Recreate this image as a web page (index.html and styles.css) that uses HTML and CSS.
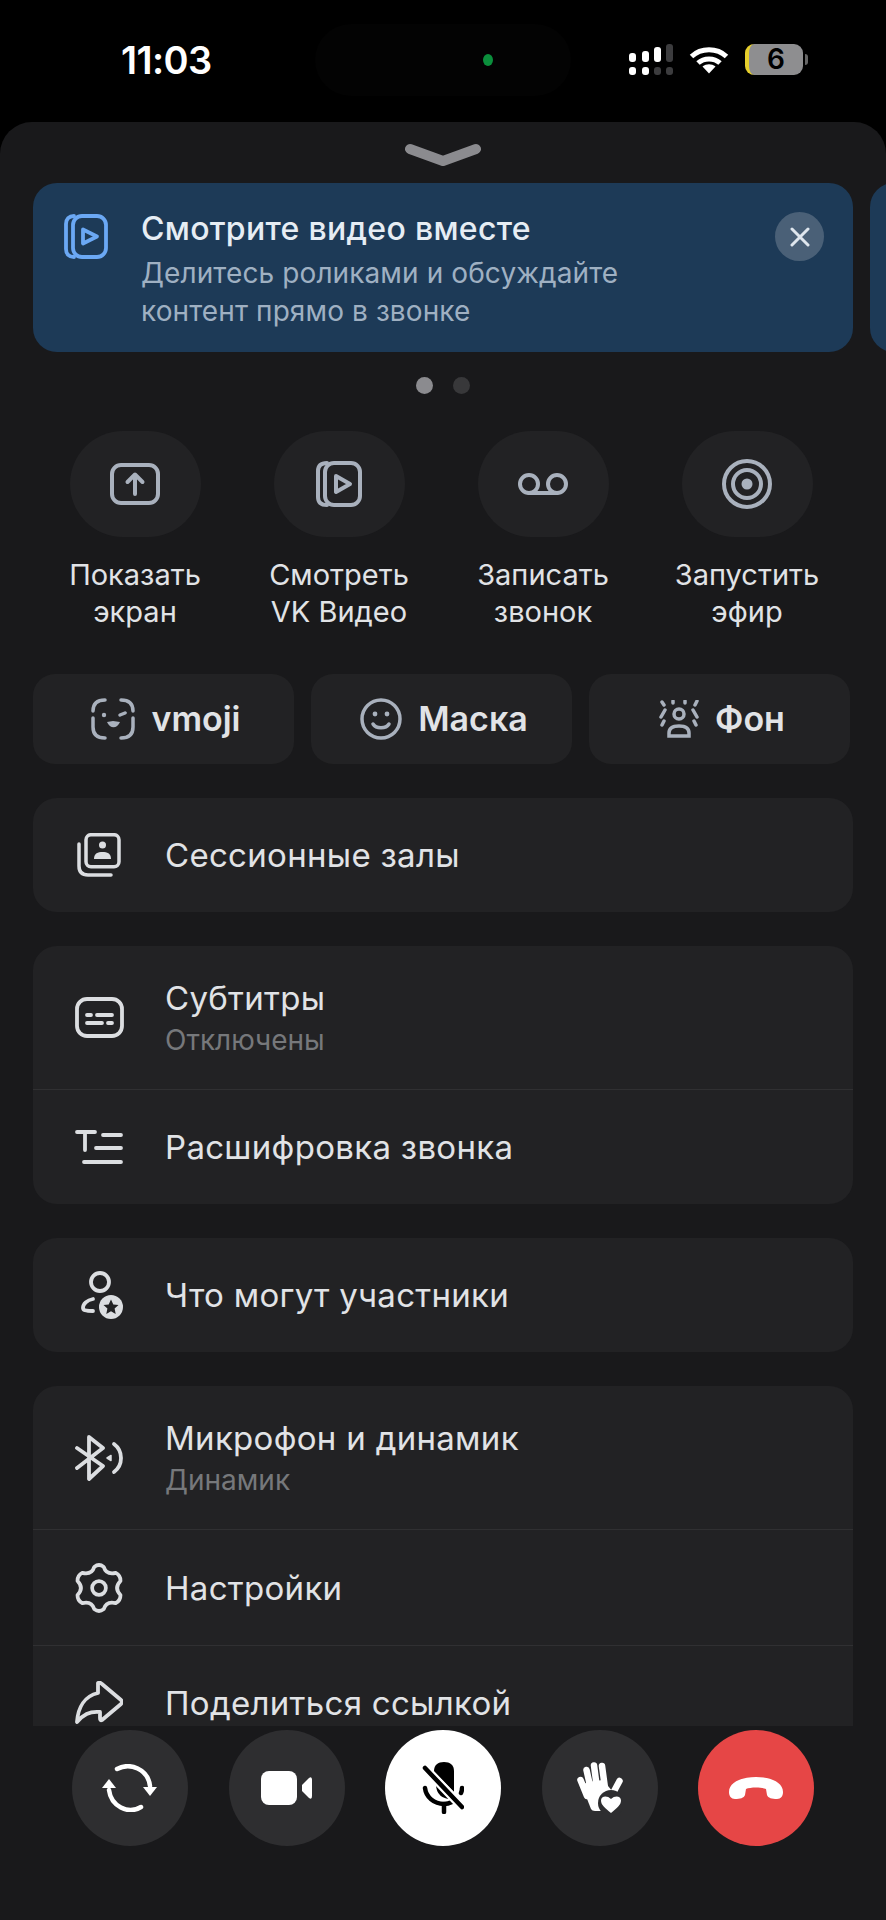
FILE: index.html
```html
<!DOCTYPE html>
<html lang="ru">
<head>
<meta charset="utf-8">
<title>Звонок</title>
<link rel="stylesheet" href="styles.css">
</head>
<body>
<div class="phone">
  <header class="status">
    <span class="time">11:03</span>
    <div class="island"><span class="cam-dot"></span></div>
    <div class="status-icons">
      <svg class="sig" viewBox="0 0 44 31" fill="#fff"><rect x="0" y="9" width="7" height="9" rx="3"/><rect x="13" y="7" width="7" height="11" rx="3"/><rect x="25" y="3" width="7" height="15" rx="3"/><rect x="37" y="0" width="7" height="18" rx="3" fill="#3c3c3e"/><rect x="0" y="23" width="7" height="8" rx="3"/><rect x="13" y="23" width="7" height="8" rx="3"/><rect x="25" y="23" width="7" height="8" rx="3" fill="#3c3c3e"/><rect x="37" y="23" width="7" height="8" rx="3" fill="#3c3c3e"/></svg>
      <svg class="wifi" viewBox="0 0 40 28" fill="none" stroke="#fff" stroke-width="5"><path d="M2.5 10.5C12 1.500 28 1.500 37.500 10.500"/><path d="M9 17C15 11.500 25 11.500 31 17"/><path fill="#fff" stroke="none" d="M13.500 20.500C17.500 17.500 22.500 17.500 26.500 20.500L20 27.500Z"/></svg>
      <div class="battery"><span class="bat-body"><span class="bat-num">6</span></span><span class="bat-cap"></span></div>
    </div>
  </header>

  <main class="sheet">
    <div class="handle">
      <svg class="chevron" viewBox="0 0 76 23" fill="none" stroke="#8b8b8f" stroke-width="10" stroke-linecap="round" stroke-linejoin="round"><path d="M5 6L38 18L71 6"/></svg>
    </div>

    <div class="carousel">
      <section class="banner">
        <svg class="banner-icon" viewBox="0 0 44 45" fill="none" stroke="#6ba8f4" stroke-width="3.800" stroke-linejoin="round" stroke-linecap="round"><path d="M10 2C5 2 2 5 2 10V35C2 40 5 43 10 43"/><rect x="9" y="2" width="33" height="41" rx="9"/><path d="M19 15.500L33 22.500L19 29.500Z"/></svg>
        <div class="banner-text">
          <h2 class="banner-title">Смотрите видео вместе</h2>
          <p class="banner-sub">Делитесь роликами и обсуждайте<br>контент прямо в звонке</p>
        </div>
        <div class="banner-close"><svg viewBox="0 0 20 20" fill="none" stroke="#dfe6ee" stroke-width="3" stroke-linecap="round"><path d="M2 2L18 18M18 2L2 18"/></svg></div>
      </section>
      <section class="banner banner-next"></section>
    </div>

    <div class="dots"><span class="dot dot-on"></span><span class="dot"></span></div>

    <div class="actions">
      <div class="action">
        <div class="action-btn"><svg class="i-share" viewBox="0 0 50 42" fill="none" stroke="#a9b1bd" stroke-width="4" stroke-linecap="round" stroke-linejoin="round"><rect x="2" y="2" width="46" height="38" rx="9"/><path d="M25 31V12M17.500 19L25 11.500L32.500 19"/></svg></div>
        <span class="action-label">Показать<br>экран</span>
      </div>
      <div class="action">
        <div class="action-btn"><svg class="i-play" viewBox="0 0 46 46" fill="none" stroke="#a9b1bd" stroke-width="4" stroke-linecap="round" stroke-linejoin="round"><path d="M11 2C5 2 2 5 2 10V36C2 41 5 44 11 44"/><rect x="9" y="2" width="35" height="42" rx="9"/><path d="M20 15L34 23L20 31Z"/></svg></div>
        <span class="action-label">Смотреть<br>VK Видео</span>
      </div>
      <div class="action">
        <div class="action-btn"><svg class="i-rec" viewBox="0 0 50 22" fill="none" stroke="#a9b1bd" stroke-width="4" stroke-linecap="round"><circle cx="11" cy="11" r="9"/><circle cx="39" cy="11" r="9"/><path d="M11 20H39"/></svg></div>
        <span class="action-label">Записать<br>звонок</span>
      </div>
      <div class="action">
        <div class="action-btn"><svg class="i-live" viewBox="0 0 50 50" fill="none" stroke="#a9b1bd" stroke-width="4"><circle cx="25" cy="25" r="23"/><circle cx="25" cy="25" r="14"/><circle cx="25" cy="25" r="5.500" fill="#a9b1bd" stroke="none"/></svg></div>
        <span class="action-label">Запустить<br>эфир</span>
      </div>
    </div>

    <div class="pills">
      <div class="pill">
        <svg class="i-pill" viewBox="0 0 44 42" fill="none" stroke="#a9b1bd" stroke-width="3.500" stroke-linecap="round"><path d="M14 2C6 2 2 6 2 13"/><path d="M30 2C38 2 42 6 42 13"/><path d="M2 20V29C2 36 6 40 14 40"/><path d="M42 20V29C42 36 38 40 30 40"/><circle cx="13" cy="17" r="2.200" fill="#a9b1bd" stroke="none"/><path d="M29 17L34 15"/><path d="M16 24C19 31 26 31 29 24L22 23Z" fill="#a9b1bd" stroke="none"/></svg>
        <span class="pill-text">vmoji</span>
      </div>
      <div class="pill">
        <svg class="i-pill" viewBox="0 0 42 42" fill="none" stroke="#a9b1bd" stroke-width="3.500" stroke-linecap="round"><circle cx="21" cy="21" r="19"/><circle cx="15" cy="16" r="2.400" fill="#a9b1bd" stroke="none"/><circle cx="27" cy="16" r="2.400" fill="#a9b1bd" stroke="none"/><path d="M13 26C16 31 26 31 29 26"/></svg>
        <span class="pill-text">Маска</span>
      </div>
      <div class="pill">
        <svg class="i-fon" viewBox="0 0 40 38" fill="none" stroke="#a9b1bd" stroke-width="3.500" stroke-linecap="round"><path d="M3 2L5 5M14 1V3M26 1V3M38 1L36 5M6 10L2 17M34 10L38 17M5 21L3 25M35 21L37 25"/><circle cx="20" cy="14" r="5"/><path d="M10 36V33C10 28 14 26 20 26C26 26 30 28 30 33V36Z"/></svg>
        <span class="pill-text">Фон</span>
      </div>
    </div>

    <div class="scroll">
      <div class="group">
        <div class="row">
          <span class="row-ic"><svg class="ic-session" viewBox="0 0 44 44" fill="none" stroke="#dcdee1" stroke-width="3.500" stroke-linecap="round" stroke-linejoin="round"><rect x="9" y="1.700" width="33" height="32" rx="5"/><path d="M2 11V33C2 39 5 42 11 42H34"/><circle cx="25.500" cy="12" r="3.500" fill="#dcdee1" stroke="none"/><path d="M17 26C17 20 21 19 25.500 19C30 19 34 20 34 26Z" fill="#dcdee1" stroke="none"/></svg></span>
          <span class="row-title">Сессионные залы</span>
        </div>
      </div>

      <div class="group">
        <div class="row row-two">
          <span class="row-ic"><svg class="ic-sub" viewBox="0 0 49 41" fill="none" stroke="#dcdee1" stroke-width="3.800" stroke-linecap="round"><rect x="2" y="2" width="45" height="37" rx="10"/><path d="M12 18H16M22 18H37M12 26H27M33 26H37"/></svg></span>
          <span class="row-text"><span class="row-title">Субтитры</span><span class="row-sub">Отключены</span></span>
        </div>
        <div class="row row-line">
          <span class="row-ic"><svg class="ic-trans" viewBox="0 0 48 34" fill="none" stroke="#dcdee1" stroke-width="3.800" stroke-linecap="round"><path d="M2 2H20M10 2V20M28 5H46M21 18H46M9 32H46"/></svg></span>
          <span class="row-title">Расшифровка звонка</span>
        </div>
      </div>

      <div class="group">
        <div class="row">
          <span class="row-ic"><svg class="ic-part" viewBox="0 0 42 48" fill="none" stroke="#dcdee1" stroke-width="3.800" stroke-linecap="round"><circle cx="19" cy="11" r="9"/><path d="M12 28C6 29 2 33 2 37C2 39 4 40 12 40"/><circle cx="30" cy="36" r="12" fill="#dcdee1" stroke="none"/><path d="M30 28.500L32.300 33.500L37.500 34L33.600 37.500L34.700 43L30 40.200L25.300 43L26.400 37.500L22.500 34L27.700 33.500Z" fill="#222224" stroke="none"/></svg></span>
          <span class="row-title">Что могут участники</span>
        </div>
      </div>

      <div class="group">
        <div class="row row-two">
          <span class="row-ic"><svg class="ic-bt" viewBox="0 0 48 46" fill="none" stroke="#dcdee1" stroke-width="3.800" stroke-linecap="round" stroke-linejoin="round"><path d="M2 13L28 31L14 44V2L28 13L2 33"/><path d="M39 9C43 12 46 17 46 23C46 29 43 34 39 37"/><path d="M32 23L36 20.500V25.500Z" fill="#dcdee1" stroke-width="1.500"/></svg></span>
          <span class="row-text"><span class="row-title">Микрофон и динамик</span><span class="row-sub">Динамик</span></span>
        </div>
        <div class="row row-line row-tall">
          <span class="row-ic"><svg class="ic-gear" viewBox="-1 -1 51 51" fill="none" stroke="#dcdee1" stroke-width="3.800" stroke-linejoin="round"><path d="M19.700 3Q24.500 -1 29.300 3Q32 11.500 41.600 9.100Q46.600 11.750 46.400 17.400Q39.500 24.500 46.400 31.600Q46.600 37.250 41.600 39.900Q32 37.500 29.300 46Q24.500 50 19.700 46Q17 37.500 7.400 39.900Q2.400 37.250 2.600 31.600Q9.500 24.500 2.600 17.400Q2.400 11.750 7.400 9.100Q17 11.500 19.700 3Z"/><circle cx="24.500" cy="24.500" r="7"/></svg></span>
          <span class="row-title">Настройки</span>
        </div>
        <div class="row row-line">
          <span class="row-ic"><svg class="ic-arrow" viewBox="0 0 48 44" fill="none" stroke="#dcdee1" stroke-width="3.800" stroke-linecap="round" stroke-linejoin="round"><path d="M23 2Q25 1 27 3L46 19Q48 21 46 23L27 39Q25 40 25 37V31C14 30 8 34 2 41C3 26 10 15 23 12Z"/></svg></span>
          <span class="row-title">Поделиться ссылкой</span>
        </div>
      </div>
    </div>

    <nav class="callbar">
      <button class="cbtn"><svg class="c-rot" viewBox="0 0 56 48" fill="none" stroke="#fff" stroke-width="4.500" stroke-linecap="round"><path d="M15 5C28 -2 46 5 48 22"/><path d="M7 26C9 42 26 51 39 43"/><path d="M41 23H55L48 32Z" fill="#fff" stroke="none"/><path d="M0 24H14L7 15Z" fill="#fff" stroke="none"/></svg></button>
      <button class="cbtn"><svg class="c-cam" viewBox="0 0 51 34" fill="#fff"><rect width="36" height="34" rx="8"/><path d="M41 14L48 7Q51 5 51 9V25Q51 29 48 27L41 20Z"/></svg></button>
      <button class="cbtn cbtn-white"><svg class="c-mic" viewBox="0 0 42 52" fill="none" stroke="#000" stroke-linecap="round"><path d="M12 9C12 3 16 0 22 0C28 0 32 3 32 9V30L12 10Z" fill="#000" stroke="none"/><path d="M14 22L32 37C26 38 14 36 14 22Z" fill="#000" stroke="none"/><path d="M3 26C4 35 12 42 22 42C25 42 28 41 30 40M40 26C40 28 39.500 30 39 31" stroke-width="4.500"/><path d="M22 42V50" stroke-width="4.500"/><path d="M3 6L40 45" stroke="#fff" stroke-width="9"/><path d="M3 6L40 45" stroke-width="4.500"/></svg></button>
      <button class="cbtn"><svg class="c-hand" viewBox="0 0 46 52" fill="#fff" stroke="none"><g stroke="#fff" stroke-width="6.500" stroke-linecap="round"><path d="M3.500 18L10 34M9.500 8L14 28M17 3.500L20 26M25 4L28 26M42.500 19L35 33"/></g><path d="M5 24L14 47Q15 49 18 49H28L36 30L26 18L10 20Z"/><circle cx="34" cy="41" r="13" fill="#2e2e30"/><path d="M34 51C28 46 24 43 24 38.500C24 34 30 33 34 37C38 33 44 34 44 38.500C44 43 40 46 34 51Z"/></svg></button>
      <button class="cbtn cbtn-red"><svg class="c-end" viewBox="0 0 54 22" fill="#fff"><path d="M0 15C0 5 13 0 27 0C41 0 54 5 54 15C54 19 52 22 48 22C43 22 39 21 38 18L37 12C33 10 21 10 17 12L16 18C15 21 11 22 6 22C2 22 0 19 0 15Z"/></svg></button>
    </nav>
  </main>
</div>
</body>
</html>
```

FILE: styles.css
```css
* { box-sizing: border-box; }
html, body { margin: 0; padding: 0; background: #000; }
body { font-family: Inter, "Liberation Sans", sans-serif; color: #e1e3e6; }
.phone { width: 886px; height: 1920px; display: flex; flex-direction: column; overflow: hidden; background: #000; }

.status { height: 122px; flex: none; display: flex; align-items: flex-start; padding-top: 39px; }
.time { margin-left: 121px; width: 194px; font-size: 38px; line-height: 42px; font-weight: 600; color: #fff; letter-spacing: -.6px; }
.island { width: 256px; height: 72px; margin-top: -15px; border-radius: 36px; background: #030303; display: flex; justify-content: flex-end; align-items: center; padding-right: 78px; }
.cam-dot { width: 10px; height: 12px; border-radius: 50%; background: #0b8f3c; }
.status-icons { margin-left: 58px; margin-top: 5px; display: flex; align-items: flex-start; }
.sig { width: 44px; height: 31px; margin-right: 16px; }
.wifi { width: 40px; height: 28px; margin-top: 2px; margin-right: 16px; }
.battery { display: flex; align-items: center; }
.bat-body { width: 58px; height: 31px; border-radius: 9px; background: #8e8e90; border-left: 4px solid #e6cf2c; display: flex; align-items: center; justify-content: center; }
.bat-num { font-size: 28px; font-weight: 600; color: #000; line-height: 31px; }
.bat-cap { width: 3px; height: 11px; margin-left: 2px; border-radius: 0 3px 3px 0; background: #666; }

.sheet { flex: 1; min-height: 0; display: flex; flex-direction: column; background: #19191b; border-radius: 32px 32px 0 0; }
.handle { height: 61px; flex: none; display: flex; justify-content: center; padding-top: 21px; }
.chevron { width: 76px; height: 23px; }

.carousel { flex: none; display: flex; gap: 17px; padding-left: 33px; overflow: hidden; }
.banner { flex: none; width: 820px; height: 169px; border-radius: 24px; background: #1d3a57; display: flex; align-items: flex-start; padding: 26px 29px 0 31px; }
.banner-next { width: 60px; }
.banner-icon { flex: none; width: 44px; height: 45px; margin-top: 5px; }
.banner-text { flex: 1; margin-left: 33px; }
.banner-title { margin: 0; font-size: 32px; line-height: 39px; font-weight: 500; color: #e6edf4; letter-spacing: .3px; }
.banner-sub { margin: 6px 0 0; font-size: 28px; line-height: 38px; font-weight: 400; color: #9fb0c2; letter-spacing: .1px; }
.banner-close { flex: none; width: 49px; height: 49px; margin-top: 3px; border-radius: 50%; background: #4a6077; display: flex; align-items: center; justify-content: center; }
.banner-close svg { width: 20px; height: 20px; }

.dots { flex: none; height: 16px; margin-top: 25px; display: flex; justify-content: center; gap: 20px; }
.dot { width: 17px; height: 17px; border-radius: 50%; background: #38383a; }
.dot-on { background: #8b8b8f; }

.actions { flex: none; margin-top: 38px; padding-left: 33px; display: grid; grid-template-columns: repeat(4, 204px); }
.action { display: flex; flex-direction: column; align-items: center; }
.action-btn { width: 131px; height: 106px; border-radius: 53px; background: #222224; display: flex; align-items: center; justify-content: center; }
.action-label { margin-top: 19px; font-size: 29px; line-height: 37px; text-align: center; color: #e1e3e6; white-space: nowrap; }
.i-share { width: 50px; height: 42px; }
.i-play { width: 46px; height: 46px; }
.i-rec { width: 50px; height: 22px; }
.i-live { width: 50px; height: 50px; }

.pills { flex: none; margin-top: 44px; padding-left: 33px; display: grid; grid-template-columns: repeat(3, 261px); gap: 17px; }
.pill { height: 90px; padding-left: 5px; border-radius: 22px; background: #222224; display: flex; align-items: center; justify-content: center; gap: 16px; }
.pill-text { font-size: 34px; font-weight: 600; color: #e1e3e6; line-height: 40px; }
.i-pill { height: 42px; width: auto; flex: none; }
.i-fon { height: 38px; width: 40px; flex: none; }

.scroll { flex: 1; min-height: 0; overflow: hidden; margin-top: 34px; padding: 0 33px; display: flex; flex-direction: column; gap: 34px; }
.group { flex: none; border-radius: 24px; background: #222224; }
.row { height: 114px; display: flex; align-items: center; padding-left: 41px; }
.row-two { height: 143px; }
.row-line { height: 115px; border-top: 1px solid #303032; }
.row-tall { height: 116px; }
.row-ic { flex: none; width: 50px; margin-right: 41px; display: flex; justify-content: center; align-items: center; }
.row-title { display: block; font-size: 33px; line-height: 40px; letter-spacing: .3px; color: #e1e3e6; white-space: nowrap; }
.row-text { display: block; }
.row-sub { display: block; margin-top: 5px; font-size: 28px; line-height: 34px; color: #76787b; }
.ic-session { width: 44px; height: 44px; }
.ic-sub { width: 49px; height: 41px; }
.ic-trans { width: 48px; height: 34px; }
.ic-part { width: 42px; height: 48px; margin-left: 6px; }
.ic-bt { width: 48px; height: 46px; }
.ic-gear { width: 50px; height: 50px; }
.ic-arrow { width: 48px; height: 44px; }

.callbar { flex: none; height: 194px; padding: 4px 0 0 72px; display: flex; align-items: flex-start; gap: 40.5px; }
.cbtn { flex: none; width: 116px; height: 116px; border: 0; padding: 0; border-radius: 50%; background: #2e2e30; display: flex; align-items: center; justify-content: center; }
.cbtn-white { background: #fff; }
.cbtn-red { background: #e64646; }
.c-rot { width: 56px; height: 48px; }
.c-cam { width: 51px; height: 34px; }
.c-mic { width: 42px; height: 52px; }
.c-hand { width: 46px; height: 52px; }
.c-end { width: 54px; height: 22px; }
```
